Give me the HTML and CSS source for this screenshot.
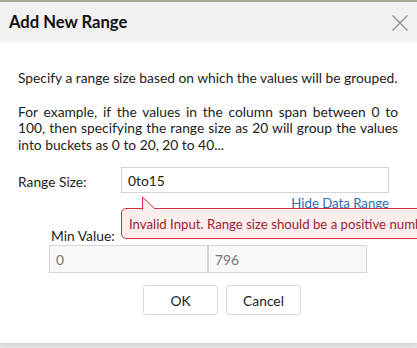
FILE: index.html
```html
<!DOCTYPE html>
<html lang="en">
<head>
    <meta charset="UTF-8">
    <meta name="viewport" content="width=device-width, initial-scale=1.0">
    <title>Add New Range</title>
    <link rel="stylesheet" href="styles.css">
</head>
<body>
    <div class="dialog">
        <div class="dialog-header">
            <h2>Add New Range</h2>
            <button class="close" title="Close">
                <svg width="16" height="16" viewBox="0 0 16 16"><path d="M0.5 0.5 L15.5 15.5 M15.5 0.5 L0.5 15.5" stroke="#8a8a8a" stroke-width="1.1" fill="none"/></svg>
            </button>
        </div>

        <div class="dialog-body">
            <p class="intro">Specify a range size based on which the values will be grouped.</p>
            <p class="example">For example, if the values in the column span between 0 to 100, then specifying the range size as 20 will group the values into buckets as 0 to 20, 20 to 40...</p>

            <div class="field-row">
                <label for="rangeSize">Range Size:</label>
                <div class="field-wrap">
                    <input type="text" id="rangeSize" class="range-input" value="0to15">
                    <div class="tooltip">
                        <svg class="tooltip-arrow" width="16" height="14" viewBox="0 0 16 14"><path d="M1.5 14 L1.5 1 L14 13" fill="#fdeeee" stroke="#cf2f3c" stroke-width="1"/></svg>
                        Invalid Input. Range size should be a positive number.
                    </div>
                </div>
            </div>
            <div class="link-row"><a href="#">Hide Data Range</a></div>

            <div class="data-range">
                <div class="range-labels">
                    <span>Min Value:</span>
                </div>
                <div class="range-values">
                    <input type="text" value="0" readonly>
                    <input type="text" value="796" readonly>
                </div>
            </div>

            <div class="actions">
                <button class="btn">OK</button>
                <button class="btn">Cancel</button>
            </div>
        </div>
    </div>
</body>
</html>
```

FILE: styles.css
```css
body {
    margin: 0;
    font-family: Lato, "Open Sans", sans-serif;
    background-color: #e9e9e9;
    height: 348px;
    overflow: hidden;
}
.dialog {
    width: 417px;
    height: 341px;
    background: white;
    border-top: 2px solid #a9a89e;
    box-shadow: 0 2px 6px rgba(0,0,0,0.12);
    overflow: hidden;
}
.dialog-header {
    height: 40px;
    background-color: #f1f1f1;
    display: flex;
    align-items: center;
    justify-content: space-between;
    padding: 0 9px 0 9px;
}
.dialog-header h2 {
    margin: 0;
    font-size: 16.6px;
    font-weight: bold;
    color: #111;
}
.close {
    border: none;
    background: none;
    padding: 0;
    width: 16px;
    height: 16px;
    cursor: pointer;
    margin-top: 1px;
}
.dialog-body {
    padding: 28px 19px 0 18px;
    font-size: 13.8px;
    line-height: 16.5px;
    color: #222;
}
.intro {
    margin: 0 0 17px 0;
}
.example {
    margin: 0;
    text-align: justify;
}
.field-row {
    display: flex;
    align-items: center;
    margin-top: 14px;
}
.field-row label {
    width: 103px;
    padding-top: 4px;
}
.field-wrap {
    position: relative;
}
.range-input {
    width: 268px;
    height: 26px;
    box-sizing: border-box;
    border: 1px solid #d3d3d3;
    padding: 0 6px;
    font-family: inherit;
    font-size: 13.8px;
    color: #222;
    outline: none;
}
.tooltip {
    position: absolute;
    left: 0;
    top: 41px;
    width: 320px;
    height: 31px;
    box-sizing: border-box;
    border: 1px solid #cf2f3c;
    border-radius: 5px;
    background-color: #fdeeee;
    color: #9c1c33;
    padding: 0 0 0 7px;
    font-size: 13.2px;
    line-height: 30px;
    white-space: nowrap;
    z-index: 2;
}
.tooltip-arrow {
    position: absolute;
    left: 19px;
    top: -13px;
}
.link-row {
    text-align: right;
    padding-right: 9px;
    margin-top: 2px;
    font-size: 13.2px;
}
.link-row a {
    color: #2d6db5;
    text-decoration: none;
}
.data-range {
    margin-top: 16px;
    padding-left: 31px;
}
.range-labels {
    padding-left: 2px;
}
.range-values {
    display: flex;
    margin-top: 1px;
}
.range-values input {
    width: 159px;
    height: 28px;
    box-sizing: border-box;
    border: 1px solid #d6d6d6;
    background-color: #f8f8f8;
    padding: 0 6px;
    font-family: inherit;
    font-size: 13.8px;
    color: #777;
    outline: none;
}
.actions {
    display: flex;
    gap: 8px;
    margin-top: 12px;
    padding-left: 125px;
}
.btn {
    width: 75px;
    height: 30px;
    background: white;
    border: 1px solid #d9d9d9;
    border-radius: 3px;
    font-family: inherit;
    font-size: 13.8px;
    color: #222;
    cursor: pointer;
}
```
